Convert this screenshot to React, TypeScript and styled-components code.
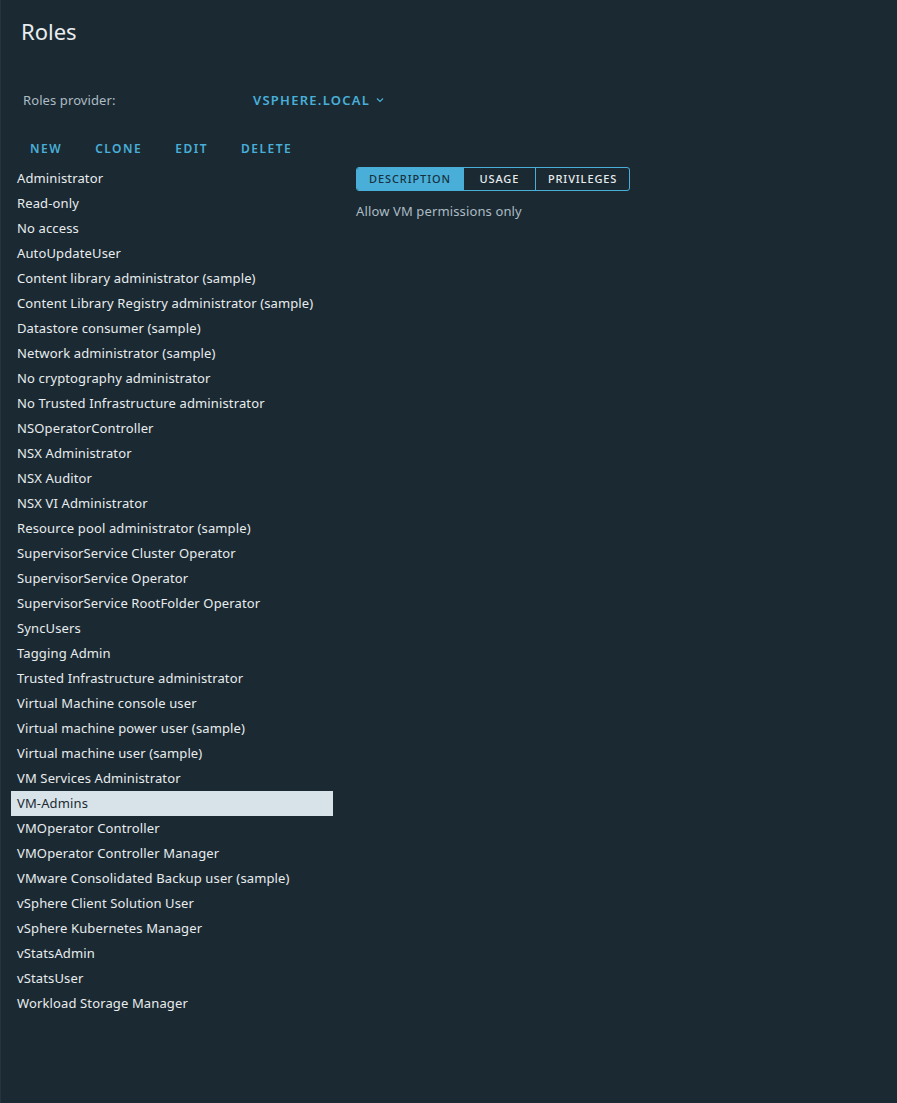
import React, { useState } from 'react';
import styled, { createGlobalStyle } from 'styled-components';

const BG = '#1b2a32';
const BLUE = '#49afd9';
const TEXT = '#e9ecef';
const MUTED = '#adbbc4';

const GlobalStyle = createGlobalStyle`
    html, body {
        margin: 0;
        padding: 0;
        background: ${BG};
    }
    body {
        font-family: "Noto Sans", "Liberation Sans", sans-serif;
    }
`;

const Page = styled.div`
    min-height: 1103px;
    box-sizing: border-box;
    background: ${BG};
    border-left: 1px solid #25343d;
    padding: 0 0 0 10px;
    color: ${TEXT};
`;

const Title = styled.h1`
    margin: 0;
    padding: 16px 0 0 10px;
    font-size: 22px;
    font-weight: 400;
    line-height: 30px;
    color: ${TEXT};
`;

const ProviderRow = styled.div`
    display: flex;
    align-items: center;
    margin-top: 44px;
    padding-left: 12px;
    height: 20px;
`;

const ProviderLabel = styled.span`
    width: 230px;
    font-size: 13px;
    letter-spacing: 0.1px;
    color: ${MUTED};
`;

const ProviderValue = styled.span`
    display: flex;
    align-items: center;
    gap: 6px;
    font-size: 13px;
    font-weight: 600;
    letter-spacing: 1.25px;
    color: ${BLUE};
`;

const Toolbar = styled.div`
    display: flex;
    margin-top: 27px;
    padding-left: 7px;
    height: 22px;
    align-items: center;
`;

const ToolButton = styled.button`
    background: none;
    border: none;
    padding: 0 12px;
    margin-right: 9px;
    font-family: inherit;
    font-size: 12px;
    font-weight: 600;
    letter-spacing: 1.5px;
    color: ${BLUE};
    cursor: pointer;
`;

const Body = styled.div`
    display: flex;
    gap: 23px;
    margin-top: 7px;
`;

const RoleList = styled.ul`
    list-style: none;
    margin: 0;
    padding: 0;
    width: 322px;
`;

const RoleItem = styled.li<{ $selected?: boolean }>`
    height: 25px;
    line-height: 24px;
    padding-left: 6px;
    font-size: 13px;
    letter-spacing: 0.13px;
    color: ${(p) => (p.$selected ? '#1b2a32' : TEXT)};
    background: ${(p) => (p.$selected ? '#d8e3e9' : 'transparent')};
    cursor: pointer;
    white-space: nowrap;
`;

const Detail = styled.div`
    padding-top: 0;
`;

const Tabs = styled.div`
    display: inline-flex;
    border: 1px solid ${BLUE};
    border-radius: 3px;
    overflow: hidden;
    height: 22px;
`;

const Tab = styled.button<{ $active?: boolean }>`
    border: none;
    border-left: 1px solid ${BLUE};
    &:first-child { border-left: none; }
    min-width: 72px;
    padding: 0 12px;
    font-family: inherit;
    font-size: 11px;
    font-weight: 500;
    letter-spacing: 0.9px;
    text-align: center;
    background: ${(p) => (p.$active ? BLUE : 'transparent')};
    color: ${(p) => (p.$active ? '#18323f' : TEXT)};
    cursor: pointer;
`;

const Description = styled.p`
    margin: 11px 0 0 0;
    font-size: 13px;
    letter-spacing: 0.13px;
    color: ${MUTED};
`;

const roles = [
    'Administrator',
    'Read-only',
    'No access',
    'AutoUpdateUser',
    'Content library administrator (sample)',
    'Content Library Registry administrator (sample)',
    'Datastore consumer (sample)',
    'Network administrator (sample)',
    'No cryptography administrator',
    'No Trusted Infrastructure administrator',
    'NSOperatorController',
    'NSX Administrator',
    'NSX Auditor',
    'NSX VI Administrator',
    'Resource pool administrator (sample)',
    'SupervisorService Cluster Operator',
    'SupervisorService Operator',
    'SupervisorService RootFolder Operator',
    'SyncUsers',
    'Tagging Admin',
    'Trusted Infrastructure administrator',
    'Virtual Machine console user',
    'Virtual machine power user (sample)',
    'Virtual machine user (sample)',
    'VM Services Administrator',
    'VM-Admins',
    'VMOperator Controller',
    'VMOperator Controller Manager',
    'VMware Consolidated Backup user (sample)',
    'vSphere Client Solution User',
    'vSphere Kubernetes Manager',
    'vStatsAdmin',
    'vStatsUser',
    'Workload Storage Manager',
];

const tabs = ['DESCRIPTION', 'USAGE', 'PRIVILEGES'];

const Chevron = () => (
    <svg width="8" height="6" viewBox="0 0 8 6">
        <path d="M1 1.5 L4 4.5 L7 1.5" fill="none" stroke={BLUE} strokeWidth="1.2" />
    </svg>
);

const App = () => {
    const [selected, setSelected] = useState('VM-Admins');
    const [tab, setTab] = useState('DESCRIPTION');

    return (
        <Page>
            <GlobalStyle />
            <Title>Roles</Title>
            <ProviderRow>
                <ProviderLabel>Roles provider:</ProviderLabel>
                <ProviderValue>VSPHERE.LOCAL <Chevron /></ProviderValue>
            </ProviderRow>
            <Toolbar>
                <ToolButton>NEW</ToolButton>
                <ToolButton>CLONE</ToolButton>
                <ToolButton>EDIT</ToolButton>
                <ToolButton>DELETE</ToolButton>
            </Toolbar>
            <Body>
                <RoleList>
                    {roles.map((r) => (
                        <RoleItem key={r} $selected={r === selected} onClick={() => setSelected(r)}>
                            {r}
                        </RoleItem>
                    ))}
                </RoleList>
                <Detail>
                    <Tabs>
                        {tabs.map((t) => (
                            <Tab key={t} $active={t === tab} onClick={() => setTab(t)}>
                                {t}
                            </Tab>
                        ))}
                    </Tabs>
                    <Description>Allow VM permissions only</Description>
                </Detail>
            </Body>
        </Page>
    );
};

export default App;
